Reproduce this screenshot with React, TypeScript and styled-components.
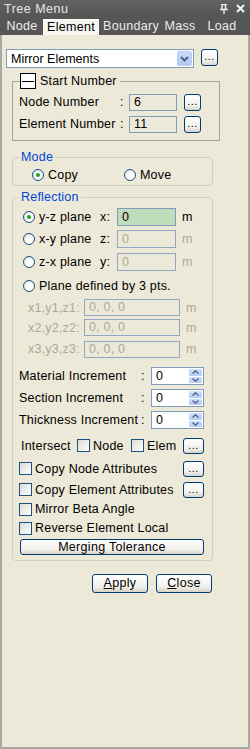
import React from 'react';
import styled, { createGlobalStyle } from 'styled-components';

const GlobalStyle = createGlobalStyle`
  html, body {
    margin: 0;
    padding: 0;
    background: #ece9d8;
  }
  body {
    font-family: "Liberation Sans", Arial, sans-serif;
    font-size: 12.5px;
    color: #000;
  }
  * { box-sizing: border-box; }
`;

const Panel = styled.div`
  width: 250px;
  height: 749px;
  display: flex;
  flex-direction: column;
  overflow: hidden;
  background: #ece9d8;
`;

const TitleBar = styled.div`
  height: 17px;
  flex: none;
  background: linear-gradient(#626262, #555555);
  color: #e4e4e4;
  display: flex;
  align-items: center;
  justify-content: space-between;
  padding: 0 5px 0 4px;
  font-size: 12.5px;
  letter-spacing: 0.5px;
`;

const TitleIcons = styled.div`
  display: flex;
  align-items: center;
  gap: 8px;
`;

const TabBar = styled.div`
  height: 18px;
  flex: none;
  background: #565656;
  display: flex;
  align-items: flex-end;
  padding-left: 1px;
`;

const Tab = styled.div<{ $w: number; $active?: boolean }>`
  width: ${p => p.$w}px;
  height: ${p => (p.$active ? 16 : 17)}px;
  text-align: center;
  line-height: ${p => (p.$active ? 15 : 16)}px;
  color: ${p => (p.$active ? '#000' : '#ececec')};
  background: ${p => (p.$active ? '#f6f5ef' : 'transparent')};
  border: ${p => (p.$active ? '1px solid #ffffff' : 'none')};
  border-bottom: none;
  letter-spacing: 0.3px;
`;

const Body = styled.div`
  flex: 1;
  display: flex;
  flex-direction: column;
  border: 2px solid #a9a9a5;
  border-top: none;
  padding: 14px 0 0 4px;
`;

const ComboRow = styled.div`
  display: flex;
  gap: 7px;
  align-items: flex-start;
`;

const Combo = styled.div`
  width: 188px;
  height: 19px;
  border: 1px solid #7f9db9;
  background: #fff;
  display: flex;
  align-items: center;
  justify-content: space-between;
  padding-left: 4px;
`;

const ComboArrow = styled.div`
  width: 15px;
  height: 15px;
  margin-right: 1px;
  border-radius: 2px;
  background: linear-gradient(#cddbfc, #b2c8f6);
  border: 1px solid #b9cbf3;
  display: flex;
  align-items: center;
  justify-content: center;
`;

const DotsButton = styled.div<{ $w?: number; $h?: number }>`
  width: ${p => p.$w ?? 17}px;
  height: ${p => p.$h ?? 17}px;
  flex: none;
  border: 1px solid #003c74;
  border-radius: 3px;
  background: linear-gradient(#ffffff, #f1f0ea 70%, #d8d3c6);
  font-size: 11px;
  line-height: ${p => (p.$h ?? 17) - 4}px;
  text-align: center;
  letter-spacing: 0.5px;
`;

const Group = styled.fieldset<{ $w: number; $mt: number; $round?: boolean; $pb?: number }>`
  width: ${p => p.$w}px;
  margin: ${p => p.$mt}px 0 0 6px;
  padding: 2px 6px ${p => p.$pb ?? 5}px 6px;
  border: 1px solid ${p => (p.$round ? '#d0d0bf' : '#a3a3a0')};
  border-radius: ${p => (p.$round ? 4 : 0)}px;
  min-width: 0;
`;

const Legend = styled.legend<{ $blue?: boolean }>`
  padding: 0 2px;
  line-height: 14px;
  color: ${p => (p.$blue ? '#0046d5' : '#000')};
  letter-spacing: 0.2px;
`;

const CollapseLegend = styled.legend`
  margin-left: 1px;
  padding: 0 3px 0 0;
  display: flex;
  align-items: center;
  gap: 4px;
  line-height: 16px;
  letter-spacing: 0.2px;
`;

const CollapseBox = styled.span`
  width: 16px;
  height: 16px;
  border: 1px solid #000;
  background: #fff;
  display: flex;
  align-items: center;
  justify-content: center;
  &::after {
    content: '';
    width: 12px;
    height: 1px;
    background: #000;
  }
`;

const Row = styled.div<{ $h: number; $mt?: number; $pl?: number }>`
  height: ${p => p.$h}px;
  margin-top: ${p => p.$mt ?? 0}px;
  padding-left: ${p => p.$pl ?? 0}px;
  display: flex;
  align-items: center;
  white-space: nowrap;
  letter-spacing: 0.2px;
`;

const Label = styled.span<{ $w?: number; $disabled?: boolean }>`
  width: ${p => (p.$w ? `${p.$w}px` : 'auto')};
  flex: none;
  color: ${p => (p.$disabled ? '#aca899' : '#000')};
`;

const Field = styled.div<{ $w: number; $h?: number; $bg?: string; $disabled?: boolean }>`
  width: ${p => p.$w}px;
  height: ${p => p.$h ?? 18}px;
  flex: none;
  border: 1px solid ${p => (p.$disabled ? '#92a8c2' : '#7f9db9')};
  background: ${p => p.$bg ?? (p.$disabled ? '#ece9d8' : '#fff')};
  color: ${p => (p.$disabled ? '#aca899' : '#000')};
  padding-left: 4px;
  line-height: ${p => (p.$h ?? 18) - 2}px;
`;

const Unit = styled.span<{ $disabled?: boolean }>`
  margin-left: 6px;
  color: ${p => (p.$disabled ? '#aca899' : '#000')};
`;

const Radio = styled.span<{ $checked?: boolean; $ml?: number }>`
  width: 12px;
  height: 12px;
  flex: none;
  margin-left: ${p => p.$ml ?? 0}px;
  margin-right: 4px;
  border: 1px solid #1c5180;
  border-radius: 50%;
  background: radial-gradient(circle at 60% 60%, #ffffff 30%, #dcdcd5);
  display: flex;
  align-items: center;
  justify-content: center;
  &::after {
    content: '';
    width: 4px;
    height: 4px;
    border-radius: 50%;
    background: ${p => (p.$checked ? '#21a121' : 'transparent')};
  }
`;

const RadioItem = styled.span<{ $w?: number }>`
  display: flex;
  align-items: center;
  width: ${p => (p.$w ? `${p.$w}px` : 'auto')};
`;

const Check = styled.span<{ $ml?: number }>`
  width: 13px;
  height: 13px;
  flex: none;
  margin-left: ${p => p.$ml ?? 0}px;
  margin-right: 3px;
  border: 1px solid #1c5180;
  background: linear-gradient(135deg, #dcdcd7, #ffffff);
`;

const Spin = styled.div`
  width: 53px;
  height: 18px;
  flex: none;
  border: 1px solid #7f9db9;
  background: #fff;
  display: flex;
  justify-content: space-between;
  padding: 1px 1px 1px 4px;
  line-height: 14px;
`;

const SpinButtons = styled.div`
  width: 13px;
  display: flex;
  flex-direction: column;
  gap: 1px;
`;

const SpinPart = styled.div`
  flex: 1;
  background: linear-gradient(#d3e0fd, #b6cbf8);
  border-radius: 1px;
  display: flex;
  align-items: center;
  justify-content: center;
`;

const WideButton = styled.div`
  width: 184px;
  height: 16px;
  margin: 2px 0 0 1px;
  border: 1px solid #003c74;
  border-radius: 3px;
  background: linear-gradient(#ffffff, #f1f0ea 70%, #d8d3c6);
  text-align: center;
  line-height: 14px;
  letter-spacing: 0.3px;
`;

const Footer = styled.div`
  display: flex;
  gap: 8px;
  margin: 13px 0 0 86px;
`;

const PushButton = styled.div`
  width: 56px;
  height: 19px;
  border: 1px solid #003c74;
  border-radius: 3px;
  background: linear-gradient(#ffffff, #f1f0ea 70%, #d8d3c6);
  text-align: center;
  line-height: 17px;
  letter-spacing: 0.3px;
  u { text-decoration: underline; }
`;

const Spacer = styled.span<{ $w: number }>`
  width: ${p => p.$w}px;
  flex: none;
`;

const Arrow = ({ up }: { up?: boolean }) => (
  <svg width="7" height="4" viewBox="0 0 7 4">
    <path d={up ? 'M0.5 3.5 L3.5 0.8 L6.5 3.5' : 'M0.5 0.5 L3.5 3.2 L6.5 0.5'} fill="none" stroke="#4d6185" strokeWidth="1.3" />
  </svg>
);

const SpinBox = ({ value }: { value: string }) => (
  <Spin>
    <span>{value}</span>
    <SpinButtons>
      <SpinPart><Arrow up /></SpinPart>
      <SpinPart><Arrow /></SpinPart>
    </SpinButtons>
  </Spin>
);

const App: React.FC = () => (
  <Panel>
    <GlobalStyle />
    <TitleBar>
      <span>Tree Menu</span>
      <TitleIcons>
        <svg width="8" height="10" viewBox="0 0 8 10">
          <path d="M1 0.5 H7 M2 0.5 V5 M5.5 0.5 V5 M0 5.5 H8 M4 5.5 V10" stroke="#f0f0f0" strokeWidth="1.4" fill="none" />
        </svg>
        <svg width="9" height="9" viewBox="0 0 9 9">
          <path d="M1 1 L8 8 M8 1 L1 8" stroke="#f4f4f4" strokeWidth="2" />
        </svg>
      </TitleIcons>
    </TitleBar>
    <TabBar>
      <Tab $w={42}>Node</Tab>
      <Tab $w={56} $active>Element</Tab>
      <Tab $w={64}>Boundary</Tab>
      <Tab $w={34}>Mass</Tab>
      <Tab $w={50}>Load</Tab>
    </TabBar>
    <Body>
      <ComboRow>
        <Combo>
          <span>Mirror Elements</span>
          <ComboArrow>
            <svg width="9" height="6" viewBox="0 0 9 6">
              <path d="M1 1 L4.5 4.5 L8 1" fill="none" stroke="#4d6185" strokeWidth="2" />
            </svg>
          </ComboArrow>
        </Combo>
        <DotsButton>...</DotsButton>
      </ComboRow>

      <Group $w={208} $mt={5}>
        <CollapseLegend>
          <CollapseBox />
          Start Number
        </CollapseLegend>
        <Row $h={22}>
          <Label $w={101}>Node Number</Label>
          <Label $w={9}>:</Label>
          <Field $w={48} $h={17} $bg="#ece9d8">6</Field>
          <Spacer $w={7} />
          <DotsButton>...</DotsButton>
        </Row>
        <Row $h={22}>
          <Label $w={101}>Element Number</Label>
          <Label $w={9}>:</Label>
          <Field $w={48} $h={17} $bg="#ece9d8">11</Field>
          <Spacer $w={7} />
          <DotsButton>...</DotsButton>
        </Row>
      </Group>

      <Group $w={201} $mt={9} $round $pb={1}>
        <Legend $blue>Mode</Legend>
        <Row $h={18}>
          <RadioItem $w={105}>
            <Radio $checked $ml={13} />Copy
          </RadioItem>
          <RadioItem>
            <Radio />Move
          </RadioItem>
        </Row>
      </Group>

      <Group $w={201} $mt={4} $round $pb={5}>
        <Legend $blue>Reflection</Legend>
        <Row $h={22} $pl={4}>
          <Radio $checked />
          <Label $w={61}>y-z plane</Label>
          <Label $w={17}>x:</Label>
          <Field $w={59} $bg="#bfddbb">0</Field>
          <Unit>m</Unit>
        </Row>
        <Row $h={22} $pl={4}>
          <Radio />
          <Label $w={61}>x-y plane</Label>
          <Label $w={17}>z:</Label>
          <Field $w={59} $disabled>0</Field>
          <Unit $disabled>m</Unit>
        </Row>
        <Row $h={23} $pl={4}>
          <Radio />
          <Label $w={61}>z-x plane</Label>
          <Label $w={17}>y:</Label>
          <Field $w={59} $disabled>0</Field>
          <Unit $disabled>m</Unit>
        </Row>
        <Row $h={25} $pl={4}>
          <Radio />
          <Label>Plane defined by 3 pts.</Label>
        </Row>
        <Row $h={19} $pl={9}>
          <Label $w={56} $disabled>x1,y1,z1:</Label>
          <Field $w={96} $h={17} $disabled>0, 0, 0</Field>
          <Unit $disabled>m</Unit>
        </Row>
        <Row $h={21} $pl={9}>
          <Label $w={56} $disabled>x2,y2,z2:</Label>
          <Field $w={96} $h={17} $disabled>0, 0, 0</Field>
          <Unit $disabled>m</Unit>
        </Row>
        <Row $h={22} $pl={9}>
          <Label $w={56} $disabled>x3,y3,z3:</Label>
          <Field $w={96} $h={17} $disabled>0, 0, 0</Field>
          <Unit $disabled>m</Unit>
        </Row>
        <Row $h={22} $mt={5}>
          <Label $w={122}>Material Increment</Label>
          <Label $w={10}>:</Label>
          <SpinBox value="0" />
        </Row>
        <Row $h={22}>
          <Label $w={122}>Section Increment</Label>
          <Label $w={10}>:</Label>
          <SpinBox value="0" />
        </Row>
        <Row $h={22}>
          <Label $w={122}>Thickness Increment</Label>
          <Label $w={10}>:</Label>
          <SpinBox value="0" />
        </Row>
        <Row $h={23} $mt={3} $pl={2}>
          <Label $w={56}>Intersect</Label>
          <Check />
          <Label $w={38}>Node</Label>
          <Check />
          <Label $w={36}>Elem</Label>
          <DotsButton $w={21} $h={16}>...</DotsButton>
        </Row>
        <Row $h={23}>
          <Check />
          <Label $w={148}>Copy Node Attributes</Label>
          <DotsButton $w={21} $h={16}>...</DotsButton>
        </Row>
        <Row $h={19}>
          <Check />
          <Label $w={148}>Copy Element Attributes</Label>
          <DotsButton $w={21} $h={16}>...</DotsButton>
        </Row>
        <Row $h={20}>
          <Check />
          <Label>Mirror Beta Angle</Label>
        </Row>
        <Row $h={18}>
          <Check />
          <Label>Reverse Element Local</Label>
        </Row>
        <WideButton>Merging Tolerance</WideButton>
      </Group>

      <Footer>
        <PushButton><u>A</u>pply</PushButton>
        <PushButton><u>C</u>lose</PushButton>
      </Footer>
    </Body>
  </Panel>
);

export default App;
